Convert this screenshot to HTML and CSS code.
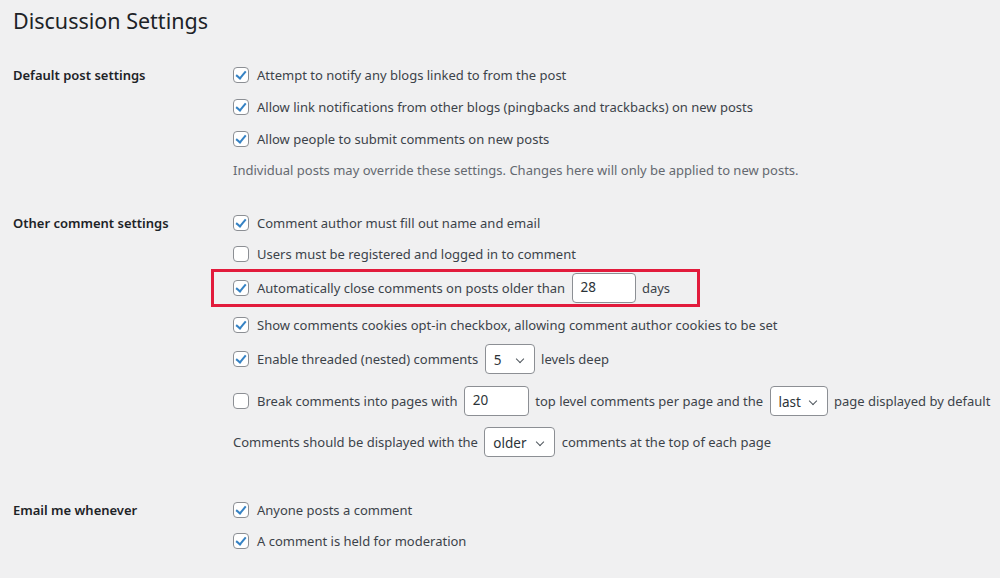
FILE: index.html
```html
<!DOCTYPE html>
<html lang="en">
<head>
  <meta charset="UTF-8">
  <title>Discussion Settings</title>
  <link rel="stylesheet" href="styles.css">
</head>
<body>
  <div class="wrap">
    <h1>Discussion Settings</h1>

    <div class="section s-default">
      <div class="label">Default post settings</div>
      <div class="fields">
        <div class="row r32"><span class="cb on"></span>Attempt to notify any blogs linked to from the post</div>
        <div class="row r32"><span class="cb on"></span>Allow link notifications from other blogs (pingbacks and trackbacks) on new posts</div>
        <div class="row r32"><span class="cb on"></span>Allow people to submit comments on new posts</div>
        <div class="row desc">Individual posts may override these settings. Changes here will only be applied to new posts.</div>
      </div>
    </div>

    <div class="section s-other">
      <div class="label">Other comment settings</div>
      <div class="fields">
        <div class="row r32"><span class="cb on"></span>Comment author must fill out name and email</div>
        <div class="row r30"><span class="cb"></span>Users must be registered and logged in to comment</div>
        <div class="row highlight"><span class="cb on"></span>Automatically close comments on posts older than <span class="input w64">28</span> days</div>
        <div class="row r35"><span class="cb on"></span>Show comments cookies opt-in checkbox, allowing comment author cookies to be set</div>
        <div class="row r34"><span class="cb on"></span>Enable threaded (nested) comments <span class="select w50">5</span> levels deep</div>
        <div class="row r50"><span class="cb"></span>Break comments into pages with <span class="input w65">20</span> top level comments per page and the <span class="select w58">last</span> page displayed by default</div>
        <div class="row r32">Comments should be displayed with the <span class="select w71">older</span> comments at the top of each page</div>
      </div>
    </div>

    <div class="section s-email">
      <div class="label">Email me whenever</div>
      <div class="fields">
        <div class="row r32"><span class="cb on"></span>Anyone posts a comment</div>
        <div class="row r30"><span class="cb on"></span>A comment is held for moderation</div>
      </div>
    </div>
  </div>
</body>
</html>
```

FILE: styles.css
```css
html, body {
  margin: 0;
  background: #f0f0f1;
}

body {
  font-family: "Noto Sans", "Open Sans", sans-serif;
  font-size: 13px;
  color: #3c434a;
  width: 1000px;
  height: 578px;
  overflow: hidden;
}

.wrap {
  padding-left: 13px;
}

h1 {
  margin: 0;
  padding-top: 6px;
  font-size: 21.5px;
  font-weight: 400;
  line-height: 30px;
  color: #1d2327;
}

.section {
  display: flex;
  align-items: flex-start;
}

.s-default { margin-top: 23px; }
.s-other { margin-top: 22px; }
.s-email { margin-top: 36px; }

.label {
  width: 220px;
  flex: none;
  font-weight: 600;
  color: #1d2327;
  line-height: 32px;
}

.fields {
  display: flex;
  flex-direction: column;
}

.row {
  display: flex;
  align-items: center;
  white-space: pre;
}

.r30 { height: 30px; }
.r32 { height: 32px; }
.r34 { height: 34px; }
.r35 { height: 35px; }
.r50 { height: 50px; }

.desc {
  height: 30px;
  color: #646970;
}

/* red box drawn around the auto-close row */
.highlight {
  height: 32px;
  margin-left: -22px;
  padding: 0 27px 0 19px;
  border: 3px solid #e21b3c;
  align-self: flex-start;
}

.cb {
  width: 14px;
  height: 14px;
  border: 1px solid #8c8f94;
  border-radius: 4px;
  background: #fff;
  margin-right: 8px;
  flex: none;
  position: relative;
}

.cb.on::after {
  content: "";
  position: absolute;
  left: 4px;
  top: 1px;
  width: 4px;
  height: 8px;
  border: solid #3582c4;
  border-width: 0 2.5px 2.5px 0;
  transform: rotate(40deg);
}

.input,
.select {
  box-sizing: border-box;
  height: 30px;
  border: 1px solid #8c8f94;
  border-radius: 4px;
  background: #fff;
  color: #2c3338;
  display: inline-flex;
  align-items: center;
  padding: 0 8px;
  margin: 0 3px;
  font-size: 13.5px;
}

.input { padding-bottom: 2px; }

.select {
  position: relative;
  padding-top: 2px;
}

.select::after {
  content: "";
  position: absolute;
  right: 11px;
  top: 11px;
  width: 5px;
  height: 5px;
  border: solid #50575e;
  border-width: 0 1.6px 1.6px 0;
  transform: rotate(45deg);
}

.w64 { width: 64px; }
.w65 { width: 65px; }
.w50 { width: 50px; }
.w58 { width: 58px; }
.w71 { width: 71px; }
```
